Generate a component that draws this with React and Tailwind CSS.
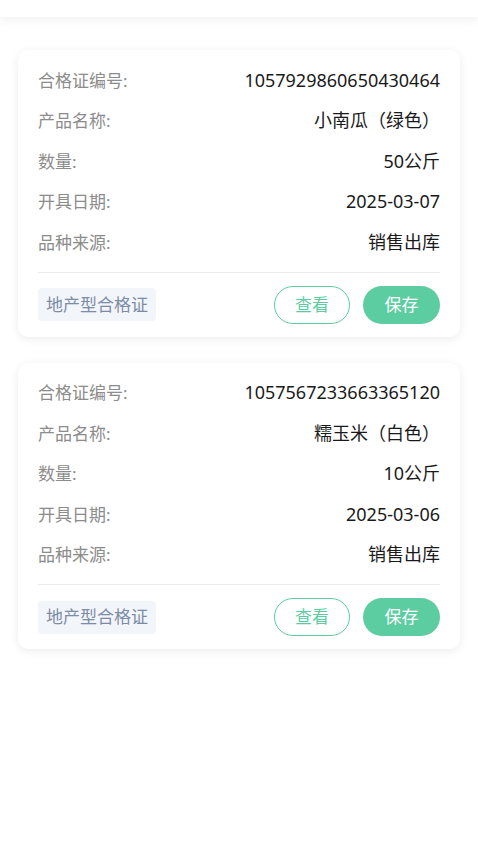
import React from "react";

const cards = [
  { no: "1057929860650430464", name: "小南瓜（绿色）", qty: "50公斤", date: "2025-03-07", src: "销售出库" },
  { no: "1057567233663365120", name: "糯玉米（白色）", qty: "10公斤", date: "2025-03-06", src: "销售出库" },
];

function Row({ label, value }) {
  return (
    <div className="flex h-[40.5px] items-center justify-between">
      <span className="text-[17px] text-[#8c8c8c]">{label}</span>
      <span className="text-[18px] text-[#1a1a1a]">{value}</span>
    </div>
  );
}

function Card({ c }) {
  return (
    <div className="rounded-[10px] bg-white px-5 pt-[10px] shadow-[0_2px_10px_rgba(0,0,0,0.08)]">
      <Row label="合格证编号:" value={c.no} />
      <Row label="产品名称:" value={c.name} />
      <Row label="数量:" value={c.qty} />
      <Row label="开具日期:" value={c.date} />
      <Row label="品种来源:" value={c.src} />
      <div className="mt-[9px] border-t border-[#ececec]" />
      <div className="flex items-center justify-between pt-[13px] pb-[13px]">
        <span className="flex h-[33px] items-center rounded-[4px] bg-[#f2f5fa] px-[8px] text-[17px] text-[#7d8ca6]">地产型合格证</span>
        <div className="flex items-center gap-[13px]">
          <button className="flex h-[38px] w-[76px] items-center justify-center rounded-full border border-[#5ccda0] bg-white text-[17px] text-[#5ccda0]">查看</button>
          <button className="flex h-[38px] w-[77px] items-center justify-center rounded-full bg-[#5ccda0] text-[17px] text-white">保存</button>
        </div>
      </div>
    </div>
  );
}

export default function App() {
  return (
    <div className="min-h-[850px] bg-white" style={{ fontFamily: '"Noto Sans", "Noto Sans CJK SC", sans-serif' }}>
      <div className="h-[17px] bg-white shadow-[0_4px_10px_rgba(0,0,0,0.05)]" />
      <div className="flex flex-col gap-[26px] px-[18px] pt-[33px]">
        {cards.map((c) => (
          <Card key={c.no} c={c} />
        ))}
      </div>
    </div>
  );
}
